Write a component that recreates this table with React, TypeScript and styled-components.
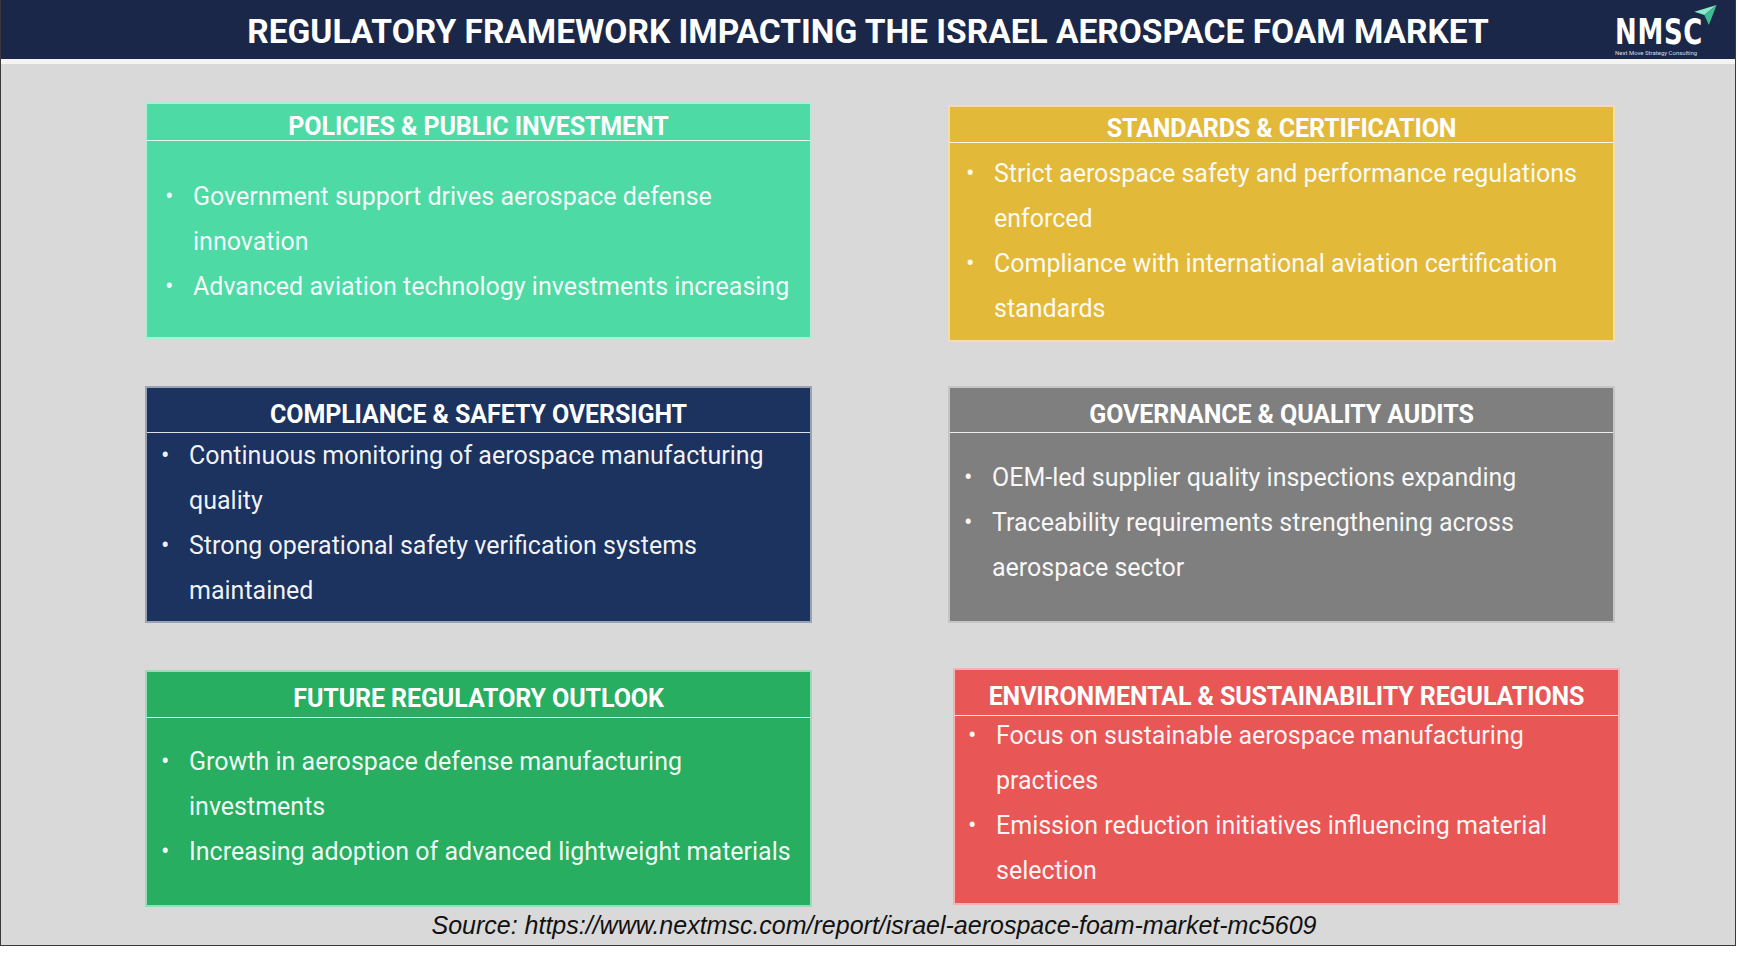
import React from 'react';
import styled, {createGlobalStyle} from 'styled-components';

const GlobalStyle = createGlobalStyle`
    * {
        box-sizing: border-box;
    }

    body {
        margin: 0;
        background: #ffffff;
        font-family: Roboto, "Liberation Sans", sans-serif;
    }
`

type CardData = {
    title: string;
    color: string;
    headH: number;
    indent: number;
    shiftX?: number;
    shiftY?: number;
    lift?: number;
    items: string[];
};

const cards: CardData[] = [
    {
        title: 'POLICIES & PUBLIC INVESTMENT',
        color: '#4ddaa5',
        headH: 37,
        indent: 18,
        lift: -4,
        items: [
            'Government support drives aerospace defense innovation',
            'Advanced aviation technology investments increasing',
        ],
    },
    {
        title: 'STANDARDS & CERTIFICATION',
        color: '#e3b93a',
        headH: 36,
        indent: 16,
        shiftY: 3,
        lift: 2,
        items: [
            'Strict aerospace safety and performance regulations enforced',
            'Compliance with international aviation certification standards',
        ],
    },
    {
        title: 'COMPLIANCE & SAFETY OVERSIGHT',
        color: '#1c325f',
        headH: 45,
        indent: 14,
        lift: 8,
        items: [
            'Continuous monitoring of aerospace manufacturing quality',
            'Strong operational safety verification systems maintained',
        ],
    },
    {
        title: 'GOVERNANCE & QUALITY AUDITS',
        color: '#7f7f7f',
        headH: 45,
        indent: 14,
        lift: 9,
        items: [
            'OEM-led supplier quality inspections expanding',
            'Traceability requirements strengthening across aerospace sector',
        ],
    },
    {
        title: 'FUTURE REGULATORY OUTLOOK',
        color: '#27ae60',
        headH: 46,
        indent: 14,
        lift: 10,
        items: [
            'Growth in aerospace defense manufacturing investments',
            'Increasing adoption of advanced lightweight materials',
        ],
    },
    {
        title: 'ENVIRONMENTAL & SUSTAINABILITY REGULATIONS',
        color: '#e85656',
        headH: 46,
        indent: 13,
        shiftX: 5,
        shiftY: -2,
        lift: 14,
        items: [
            'Focus on sustainable aerospace manufacturing practices',
            'Emission reduction initiatives influencing material selection',
        ],
    },
];

export default function App() {
    return (
        <>
            <GlobalStyle/>
            <Frame>
                <Header>
                    <span/>
                    <MainTitle>REGULATORY FRAMEWORK IMPACTING THE ISRAEL AEROSPACE FOAM MARKET</MainTitle>
                    <LogoBox>
                        <LogoMark>
                            <LogoLetters>NMSC</LogoLetters>
                            <Plane viewBox="0 0 20 18">
                                <path d="M20 0 L0 6 L9 9 Z" fill="#8de8cb"/>
                                <path d="M20 0 L9 9 L13 18 Z" fill="#3dbd92"/>
                            </Plane>
                        </LogoMark>
                        <LogoSub>Next Move Strategy Consulting</LogoSub>
                    </LogoBox>
                </Header>
                <Body>
                    <Grid>
                        {cards.map((c) => (
                            <Card key={c.title} $color={c.color} $shiftX={c.shiftX ?? 0} $shiftY={c.shiftY ?? 0}>
                                <CardHead $h={c.headH}>{c.title}</CardHead>
                                <CardBody>
                                    <List $indent={c.indent} $lift={c.lift ?? 0}>
                                        {c.items.map((it) => (
                                            <Item key={it}>
                                                <Dot>•</Dot>
                                                <span>{it}</span>
                                            </Item>
                                        ))}
                                    </List>
                                </CardBody>
                            </Card>
                        ))}
                    </Grid>
                    <Source>Source: https://www.nextmsc.com/report/israel-aerospace-foam-market-mc5609</Source>
                </Body>
            </Frame>
        </>
    );
}

const Frame = styled.div`
    width: 1736px;
    height: 946px;
    border: 1px solid #3a3a3a;
    border-top: none;
    display: flex;
    flex-direction: column;
    background: #d9d9d9;
`

const Header = styled.header`
    height: 55px;
    padding-top: 4px;
    background: #1a2748;
    display: grid;
    grid-template-columns: 1fr auto 1fr;
    align-items: center;
    border-bottom: 5px solid #f4f4f4;
    box-sizing: content-box;
`

const MainTitle = styled.h1`
    margin: 0;
    font-size: 33.5px;
    font-weight: 700;
    color: #ffffff;
    white-space: nowrap;
`

const LogoBox = styled.div`
    justify-self: end;
    margin-right: 20px;
    margin-top: 8px;
    width: 100px;
    display: flex;
    flex-direction: column;
    align-items: flex-start;
`

const LogoMark = styled.div`
    position: relative;
    height: 32px;
    width: 100px;
`

const LogoLetters = styled.span`
    display: inline-block;
    font-family: "DejaVu Sans", Roboto, sans-serif;
    font-size: 36px;
    font-weight: 700;
    line-height: 32px;
    color: #ffffff;
    letter-spacing: 1px;
    transform: scaleX(0.72);
    transform-origin: left center;
`

const Plane = styled.svg`
    position: absolute;
    left: 79px;
    top: -11px;
    width: 23px;
    height: 20px;
`

const LogoSub = styled.span`
    font-size: 6px;
    color: #d6dbe6;
    margin-top: 1px;
    white-space: nowrap;
`

const Body = styled.main`
    flex: 1;
    display: flex;
    flex-direction: column;
    padding: 38px 0 0 144px;
`

const Grid = styled.div`
    display: grid;
    grid-template-columns: 667px 667px;
    grid-auto-rows: 237px;
    column-gap: 136px;
    row-gap: 47px;
`

const Card = styled.section<{ $color: string; $shiftX: number; $shiftY: number }>`
    display: flex;
    flex-direction: column;
    background: ${({$color}) => $color};
    border: 2px solid rgba(255, 255, 255, 0.55);
    color: #ffffff;
    margin: ${({$shiftY, $shiftX}) => `${$shiftY}px ${-$shiftX}px ${-$shiftY}px ${$shiftX}px`};
`

const CardHead = styled.h2<{ $h: number }>`
    margin: 0;
    height: ${({$h}) => $h}px;
    display: flex;
    align-items: center;
    justify-content: center;
    padding-top: 8px;
    font-size: 25px;
    font-weight: 700;
    letter-spacing: -0.1px;
    border-bottom: 1px solid rgba(255, 255, 255, 0.85);
    white-space: nowrap;
`

const CardBody = styled.div`
    flex: 1;
    display: flex;
    align-items: center;
`

const List = styled.ul<{ $indent: number; $lift: number }>`
    margin: ${({$lift}) => -$lift}px 0 0 0;
    padding: 0 6px 0 ${({$indent}) => $indent}px;
    list-style: none;
    display: flex;
    flex-direction: column;
`

const Item = styled.li`
    display: flex;
    font-size: 25px;
    line-height: 45px;
    color: rgba(255, 255, 255, 0.95);
`

const Dot = styled.span`
    flex: 0 0 28px;
`

const Source = styled.p`
    margin: 0;
    padding-right: 132px;
    height: 36px;
    display: flex;
    align-items: center;
    justify-content: center;
    font-family: "Liberation Sans", Arial, sans-serif;
    font-style: italic;
    font-size: 25px;
    color: #111111;
`
